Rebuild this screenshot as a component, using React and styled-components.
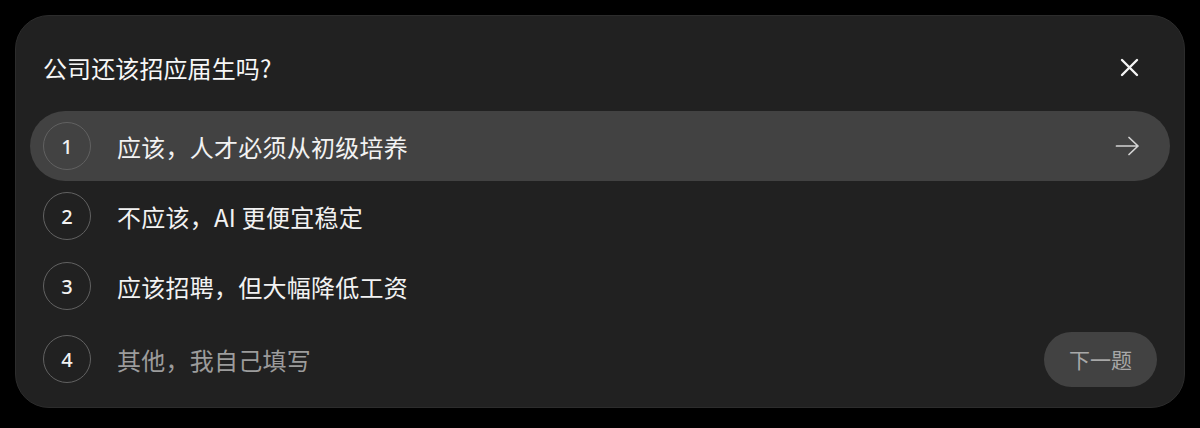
import React from 'react';
import styled, { createGlobalStyle } from 'styled-components';

const GlobalStyle = createGlobalStyle`
  html, body {
    margin: 0;
    padding: 0;
    background: #000;
  }
  body {
    font-family: 'Noto Sans CJK SC', 'Noto Sans', sans-serif;
    -webkit-font-smoothing: antialiased;
  }
`;

const Page = styled.div`
  width: 1200px;
  height: 428px;
  padding: 15px;
  box-sizing: border-box;
`;

const Card = styled.section`
  width: 1170px;
  height: 393px;
  box-sizing: border-box;
  background: #212121;
  border: 1px solid #2c2c2c;
  border-radius: 34px;
  padding: 14px 14px 0;
  display: flex;
  flex-direction: column;
`;

const Header = styled.header`
  height: 74px;
  margin-bottom: 7px;
  padding: 0 31px 0 13px;
  display: flex;
  align-items: center;
  justify-content: space-between;
`;

const Title = styled.h2`
  margin: 0;
  font-size: 24px;
  font-weight: 400;
  color: #f7f7f7;
  letter-spacing: 0.1px;
`;

const CloseButton = styled.button`
  width: 20px;
  height: 20px;
  padding: 0;
  border: none;
  background: none;
  display: flex;
  align-items: center;
  justify-content: center;
  cursor: pointer;
`;

const OptionList = styled.ul`
  list-style: none;
  margin: 0;
  padding: 0;
  display: flex;
  flex-direction: column;
`;

const Option = styled.li`
  height: 70px;
  margin-top: ${(p) => (p.$last ? '3px' : '0')};
  padding: 0 13px;
  border-radius: 35px;
  background: ${(p) => (p.$active ? '#424242' : 'transparent')};
  display: flex;
  align-items: center;
`;

const Badge = styled.span`
  width: 46px;
  height: 46px;
  flex: none;
  border-radius: 50%;
  border: 1px solid #616161;
  display: flex;
  align-items: center;
  justify-content: center;
  font-family: 'Noto Sans', sans-serif;
  font-size: 20px;
  font-weight: 500;
  color: #f2f2f2;
`;

const Label = styled.span`
  margin-left: 26px;
  flex: 1;
  font-size: 24px;
  letter-spacing: 0.25px;
  color: ${(p) => (p.$muted ? '#9c9c9c' : '#f2f2f2')};
`;

const ArrowIcon = styled.span`
  margin-right: 17px;
  display: flex;
  align-items: center;
`;

const NextButton = styled.button`
  width: 113px;
  height: 55px;
  border: none;
  border-radius: 28px;
  background: #424242;
  color: #a8a8a8;
  font-family: 'Noto Sans CJK SC', sans-serif;
  font-size: 21px;
  cursor: pointer;
`;

const options = [
  '应该，人才必须从初级培养',
  '不应该，AI 更便宜稳定',
  '应该招聘，但大幅降低工资',
  '其他，我自己填写',
];

export default function App() {
  return (
    <>
      <GlobalStyle />
      <Page>
        <Card>
          <Header>
            <Title>公司还该招应届生吗?</Title>
            <CloseButton aria-label="关闭">
              <svg width="19" height="19" viewBox="0 0 19 19">
                <path
                  d="M2 2L17 17M17 2L2 17"
                  stroke="#f5f5f5"
                  strokeWidth="2.4"
                  strokeLinecap="round"
                />
              </svg>
            </CloseButton>
          </Header>
          <OptionList>
            {options.map((text, i) => {
              const last = i === options.length - 1;
              return (
                <Option key={text} $active={i === 0} $last={last}>
                  <Badge>{i + 1}</Badge>
                  <Label $muted={last}>{text}</Label>
                  {i === 0 && (
                    <ArrowIcon>
                      <svg width="25" height="22" viewBox="0 0 25 22">
                        <path
                          d="M1.5 11H23M14 2.5L23 11L14 19.5"
                          fill="none"
                          stroke="#d4d4d4"
                          strokeWidth="1.7"
                          strokeLinecap="round"
                          strokeLinejoin="round"
                        />
                      </svg>
                    </ArrowIcon>
                  )}
                  {last && <NextButton>下一题</NextButton>}
                </Option>
              );
            })}
          </OptionList>
        </Card>
      </Page>
    </>
  );
}
